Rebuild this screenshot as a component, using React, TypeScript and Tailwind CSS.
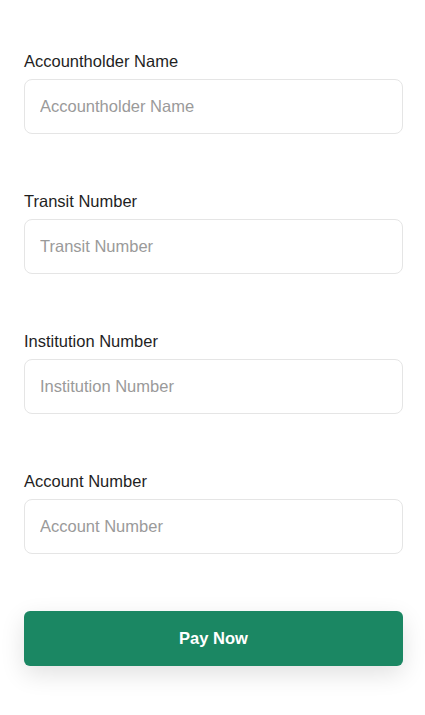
import React from "react";

type FieldProps = { label: string; first?: boolean };

function Field({ label, first }: FieldProps) {
  return (
    <div className={first ? "" : "mt-[55px]"}>
      <label className="block text-[16.5px] leading-6 text-[#1f1f1f]">{label}</label>
      <input
        type="text"
        placeholder={label}
        className="mt-1.5 block h-[55px] w-full rounded-lg border border-[#e5e5e5] bg-white px-[15px] text-[16.5px] text-[#1f1f1f] placeholder:text-[#9a9a9a] outline-none"
      />
    </div>
  );
}

export default function App() {
  return (
    <div
      className="min-h-screen w-full bg-white pl-6 pr-[22px] pt-[49px]"
      style={{ fontFamily: '"Liberation Sans", Arial, sans-serif' }}
    >
      <Field label="Accountholder Name" first />
      <Field label="Transit Number" />
      <Field label="Institution Number" />
      <Field label="Account Number" />
      <button className="mt-[57px] h-[55px] w-full rounded-md bg-[#1b8763] text-[16.5px] font-bold text-white shadow-[0_8px_24px_rgba(0,0,0,0.12)]">
        Pay Now
      </button>
    </div>
  );
}
